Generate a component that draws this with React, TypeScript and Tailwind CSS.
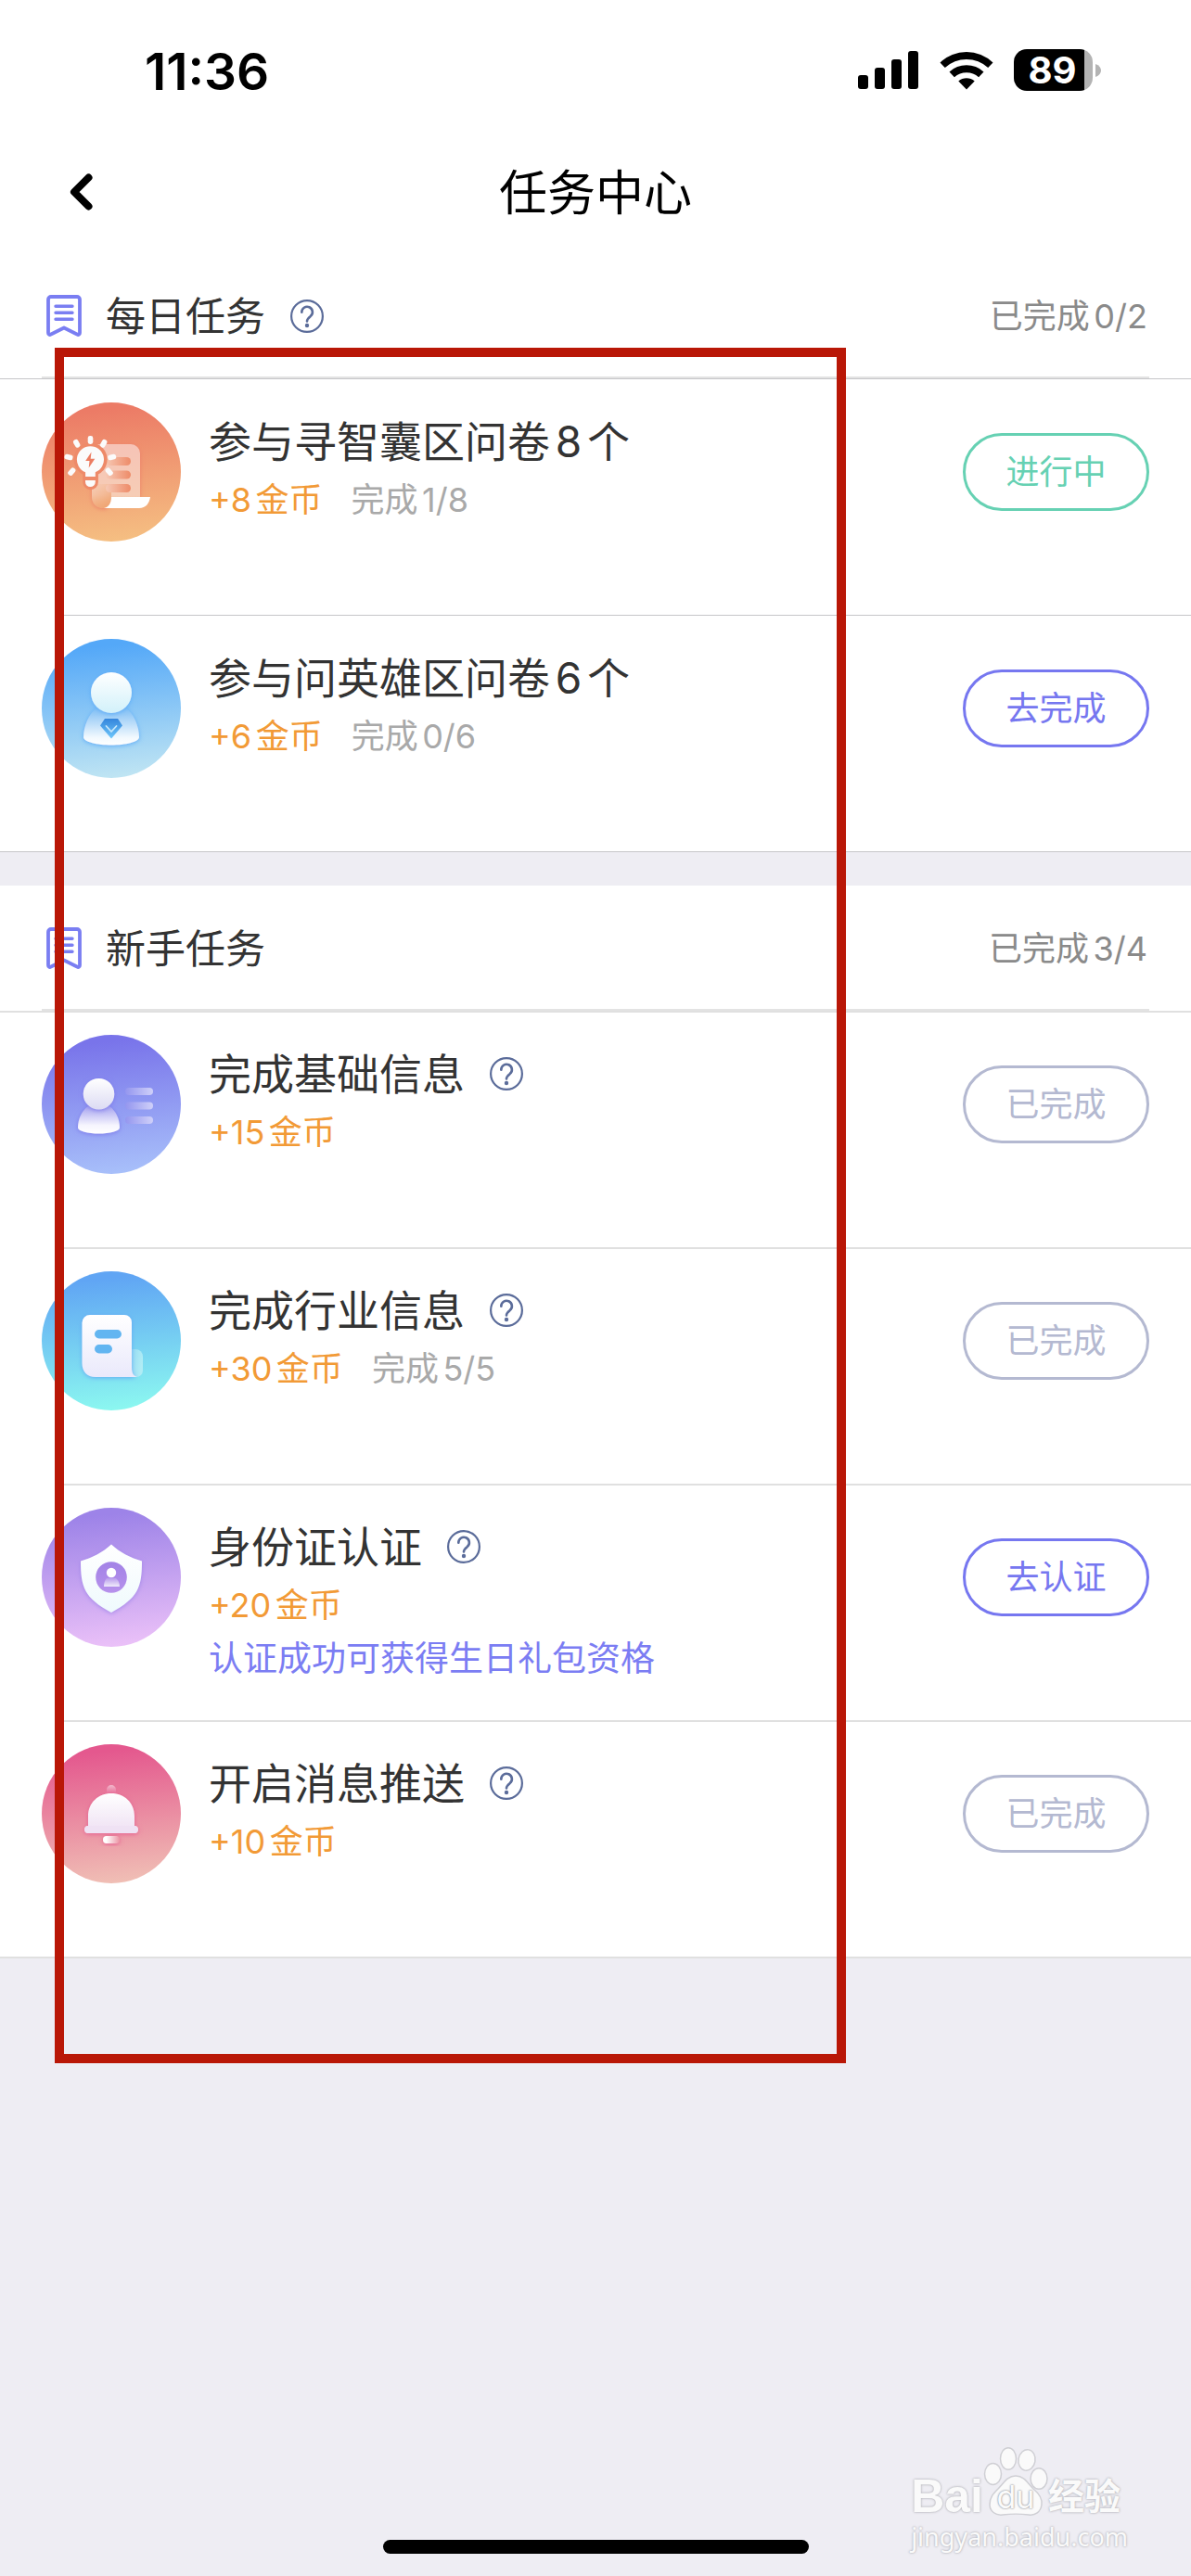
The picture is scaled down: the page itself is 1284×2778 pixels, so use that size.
import type { ReactNode } from "react";

type Status = "ongoing" | "todo" | "done";

type Task = {
  title: string;
  coins: string;
  progress?: string;
  note?: string;
  action: string;
  status: Status;
  help?: boolean;
  icon: ReactNode;
};

const statusStyles: Record<Status, string> = {
  ongoing: "border-[#66d1b3] text-[#66d1b3]",
  todo: "border-[#7677f0] text-[#7677f0]",
  done: "border-[#b4b9d1] text-[#b4b9d1]",
};

function Badge({ id, from, to, children }: { id: string; from: string; to: string; children: ReactNode }) {
  return (
    <svg viewBox="0 0 150 150" className="size-[150px] shrink-0" aria-hidden="true">
      <defs>
        <linearGradient id={`${id}-bg`} x1="0.45" y1="0" x2="0.55" y2="1">
          <stop offset="0.05" stopColor={from} />
          <stop offset="1" stopColor={to} />
        </linearGradient>
        <filter id={`${id}-sh`} x="-30%" y="-30%" width="160%" height="160%">
          <feDropShadow dx="0" dy="1" stdDeviation="2.5" floodColor={from} floodOpacity="0.9" />
        </filter>
      </defs>
      <circle cx="75" cy="75" r="75" fill={`url(#${id}-bg)`} />
      {children}
    </svg>
  );
}

function SurveyIcon() {
  return (
    <Badge id="survey" from="#ec7b66" to="#f5bf82">
      <defs>
        <linearGradient id="survey-page" x1="0" y1="0" x2="0" y2="1">
          <stop offset="0" stopColor="#f6c3b6" />
          <stop offset="0.8" stopColor="#f6cdb6" />
          <stop offset="1" stopColor="#f3b07e" />
        </linearGradient>
        <linearGradient id="survey-curl" x1="0" y1="0" x2="0.6" y2="1">
          <stop offset="0" stopColor="#f4b68e" stopOpacity="0" />
          <stop offset="1" stopColor="#f0a675" />
        </linearGradient>
        <linearGradient id="survey-line" x1="0" y1="0" x2="1" y2="0">
          <stop offset="0" stopColor="#f6c8b4" />
          <stop offset="1" stopColor="#ee8b68" />
        </linearGradient>
      </defs>
      <path
        d="M60 45h36a10 10 0 0 1 10 10v47H75c0 7-3 12-8.500 12C59 114 54 109 54 101V82z"
        fill="url(#survey-page)"
        filter="url(#survey-sh)"
      />
      <path d="M54 88v13c0 8 5 13 12.500 13 5.500 0 8.500-5 8.500-12V88z" fill="url(#survey-curl)" />
      <path d="M75 102h42c-1 7-5 12-12 12H67c5-1 8-5 8-12z" fill="#fff" />
      <rect x="69" y="59" width="27" height="9" rx="4.500" fill="url(#survey-line)" />
      <rect x="69" y="73.500" width="27" height="9" rx="4.500" fill="url(#survey-line)" />
      <rect x="69" y="88" width="27" height="9" rx="4.500" fill="url(#survey-line)" />
      <path
        d="M52.300 43.500a18 18 0 0 0-8 34V86a8.300 8.300 0 0 0 16.600 0v-8.500a18 18 0 0 0-8.600-34z"
        fill="#ee8a69"
      />
      <g fill="#fbfbfb">
        <path d="M52.500 47.200a14.500 14.500 0 0 0-5.400 28V80h10.700v-4.800a14.500 14.500 0 0 0-5.300-28z" />
        <path d="M47 84h10.800v1.700a5.400 5.400 0 0 1-10.800 0z" />
        <rect x="49.700" y="36" width="5.600" height="9" rx="2.400" />
        <rect x="34.900" y="39.800" width="5.600" height="9" rx="2.400" transform="rotate(-30 37.700 44.300)" />
        <rect x="63.900" y="39.800" width="5.600" height="9" rx="2.400" transform="rotate(30 66.700 44.300)" />
        <rect x="26.200" y="54.500" width="5.600" height="9" rx="2.400" transform="rotate(-76 29 59)" />
        <rect x="72.900" y="54.500" width="5.600" height="9" rx="2.400" transform="rotate(76 75.700 59)" />
        <rect x="29.500" y="70.200" width="5.600" height="9" rx="2.400" transform="rotate(42 32.300 74.700)" />
        <rect x="69.900" y="70.200" width="5.600" height="9" rx="2.400" transform="rotate(-42 72.700 74.700)" />
      </g>
      <path d="M53.500 53.500l-6.300 9.500h4.300l-.8 7.500 6.600-9.800h-4.600z" fill="#ec7d62" />
    </Badge>
  );
}

function HeroIcon() {
  return (
    <Badge id="hero" from="#54a8f8" to="#c0e5f3">
      <defs>
        <linearGradient id="hero-head" x1="0" y1="0" x2="0" y2="1">
          <stop offset="0" stopColor="#fff" />
          <stop offset="1" stopColor="#d2f1fa" />
        </linearGradient>
        <linearGradient id="hero-body" x1="0" y1="0" x2="0" y2="1">
          <stop offset="0" stopColor="#7dbdf4" />
          <stop offset="0.8" stopColor="#f2f9fe" />
          <stop offset="1" stopColor="#fff" />
        </linearGradient>
        <linearGradient id="hero-gem" x1="0" y1="0" x2="0" y2="1">
          <stop offset="0" stopColor="#3485dc" />
          <stop offset="1" stopColor="#6fc8fb" />
        </linearGradient>
      </defs>
      <path
        d="M60 74h30c9 6 15 20 15 32 0 5-15 8.500-30 8.500S45 111 45 106c0-12 6-26 15-32z"
        fill="url(#hero-body)"
        filter="url(#hero-sh)"
      />
      <circle cx="75" cy="58" r="22" fill="url(#hero-head)" filter="url(#hero-sh)" />
      <path d="M68 86h14l5 7.500L75 107.500 63 93.500z" fill="url(#hero-gem)" />
      <path d="M69.500 94l5.500 6 5.500-6" fill="none" stroke="#c4e6fb" strokeWidth="1.800" strokeLinecap="round" />
    </Badge>
  );
}

function ProfileIcon() {
  return (
    <Badge id="profile" from="#7974ea" to="#a8c0fa">
      <defs>
        <linearGradient id="profile-head" x1="0" y1="0" x2="0" y2="1">
          <stop offset="0" stopColor="#fff" />
          <stop offset="1" stopColor="#dcdbf3" />
        </linearGradient>
        <linearGradient id="profile-body" x1="0" y1="0" x2="0" y2="1">
          <stop offset="0" stopColor="#a7a4ef" />
          <stop offset="0.7" stopColor="#f6f5fe" />
          <stop offset="1" stopColor="#fff" />
        </linearGradient>
        <linearGradient id="profile-bar" x1="0" y1="0" x2="1" y2="0">
          <stop offset="0" stopColor="#9496ef" />
          <stop offset="1" stopColor="#cfd0f9" />
        </linearGradient>
      </defs>
      <path
        d="M50 77h23c7 5 11 14 11 23 0 4-11 6.500-22.500 6.500S39 104 39 100c0-9 4-18 11-23z"
        fill="url(#profile-body)"
        filter="url(#profile-sh)"
      />
      <circle cx="61.500" cy="63.700" r="16.800" fill="url(#profile-head)" filter="url(#profile-sh)" />
      <rect x="90" y="57" width="30" height="8" rx="4" fill="url(#profile-bar)" />
      <rect x="90" y="72.500" width="30" height="8" rx="4" fill="url(#profile-bar)" />
      <rect x="90" y="88" width="30" height="8" rx="4" fill="url(#profile-bar)" />
    </Badge>
  );
}

function IndustryIcon() {
  return (
    <Badge id="industry" from="#60a5f4" to="#8cf8f0">
      <defs>
        <linearGradient id="industry-doc" x1="0" y1="0" x2="0" y2="1">
          <stop offset="0" stopColor="#fff" />
          <stop offset="1" stopColor="#eae9fb" />
        </linearGradient>
        <linearGradient id="industry-tail" x1="0" y1="0" x2="1" y2="0.3">
          <stop offset="0" stopColor="#8cd5f1" />
          <stop offset="1" stopColor="#b0ecf5" />
        </linearGradient>
      </defs>
      <path d="M92 84h9a8 8 0 0 1 8 8v15a7 7 0 0 1-7 7H92z" fill="url(#industry-tail)" />
      <path
        d="M52 47h37a8 8 0 0 1 8 8v49c0 6 2 9 6 10H58c-9 0-14.500-6-14.500-15V55.500A8.500 8.500 0 0 1 52 47z"
        fill="url(#industry-doc)"
        filter="url(#industry-sh)"
      />
      <rect x="57" y="63" width="29" height="9.500" rx="4.700" fill="#62b5f1" />
      <rect x="57" y="79" width="19" height="9.500" rx="4.700" fill="#62b5f1" />
    </Badge>
  );
}

function IdentityIcon() {
  return (
    <Badge id="identity" from="#9d83e8" to="#ebc1f8">
      <defs>
        <linearGradient id="identity-shield" x1="0" y1="0" x2="0" y2="1">
          <stop offset="0" stopColor="#fff" />
          <stop offset="1" stopColor="#effafd" />
        </linearGradient>
        <linearGradient id="identity-disc" x1="0" y1="0" x2="0" y2="1">
          <stop offset="0" stopColor="#a283e6" />
          <stop offset="1" stopColor="#b791ec" />
        </linearGradient>
        <linearGradient id="identity-body" x1="0" y1="0" x2="0" y2="1">
          <stop offset="0" stopColor="#b99dec" />
          <stop offset="1" stopColor="#f0ebfb" />
        </linearGradient>
      </defs>
      <path
        d="M75 39.500C84 48 96 54 108 57.500C108 86 104 97 75 113C46 97 42 86 42 57.500C54 54 66 48 75 39.500z"
        fill="url(#identity-shield)"
        filter="url(#identity-sh)"
      />
      <circle cx="75" cy="75" r="16.800" fill="url(#identity-disc)" />
      <path d="M70 76h10c2.500 2 4 5 4 9H67c0-4 1-7 3-9z" fill="url(#identity-body)" />
      <circle cx="75" cy="70" r="5.200" fill="#fff" />
    </Badge>
  );
}

function BellIcon() {
  return (
    <Badge id="bell" from="#e4588e" to="#f0bfb5">
      <defs>
        <linearGradient id="bell-dome" x1="0" y1="0" x2="0" y2="1">
          <stop offset="0" stopColor="#fff" />
          <stop offset="1" stopColor="#eee0f3" />
        </linearGradient>
        <linearGradient id="bell-knob" x1="0" y1="0" x2="0" y2="1">
          <stop offset="0" stopColor="#f2b9cc" />
          <stop offset="1" stopColor="#e8709a" />
        </linearGradient>
        <linearGradient id="bell-clap" x1="0" y1="0" x2="1" y2="0">
          <stop offset="0.2" stopColor="#fff" />
          <stop offset="1" stopColor="#eb93a4" />
        </linearGradient>
      </defs>
      <path
        d="M75 53c14 0 25 10 25 25v10a4 4 0 0 1 0 8H50a4 4 0 0 1 0-8V78c0-15 11-25 25-25z"
        fill="url(#bell-dome)"
        filter="url(#bell-sh)"
      />
      <path d="M70 53v-4a5 5 0 0 1 10 0v4q-5-1.200-10 0z" fill="url(#bell-knob)" />
      <rect x="46.500" y="88" width="57" height="8" rx="4" fill="#efe2f4" />
      <rect x="66" y="99" width="18" height="8" rx="4" fill="url(#bell-clap)" filter="url(#bell-sh)" />
    </Badge>
  );
}

function BookmarkIcon() {
  return (
    <svg viewBox="0 0 38 45" className="h-[45px] w-[38px]" fill="none" stroke="#7a7ef2" aria-hidden="true">
      <path
        d="M5 2h28a3 3 0 0 1 3 3v36c0 2-1.500 2.500-3 1.500L19 35.500 5 42.500C3.500 43.500 2 43 2 41V5a3 3 0 0 1 3-3z"
        strokeWidth="3.800"
        strokeLinejoin="round"
      />
      <path d="M10 12.300h18M10 19.300h18M10 26.300h18" strokeWidth="3.400" strokeLinecap="round" />
    </svg>
  );
}

function HelpButton({ label }: { label: string }) {
  return (
    <button type="button" aria-label={label} className="ml-[27px] shrink-0">
      <svg viewBox="0 0 36 36" className="size-9" fill="none" stroke="#5b6c9a" aria-hidden="true">
        <circle cx="18" cy="18" r="16.900" strokeWidth="2.200" />
        <path d="M12.300 13.800a5.800 5.800 0 1 1 9.400 4.300c-2.400 1.900-3.700 2.900-3.700 5.400" strokeWidth="2.600" strokeLinecap="round" />
        <circle cx="18" cy="28" r="2.200" fill="#5b6c9a" stroke="none" />
      </svg>
    </button>
  );
}

function StatusBar() {
  return (
    <div className="flex h-[154px] items-center justify-between pr-[97px] pl-[156px]">
      <time className="text-[55px] leading-none font-semibold text-black">11:36</time>
      <div className="flex items-center pb-[3px]">
        <svg viewBox="0 0 66 42" className="mr-[22px] h-[42px] w-[66px]" aria-label="信号">
          <rect x="0" y="26" width="11" height="15" rx="3" />
          <rect x="18" y="18" width="11" height="23" rx="3" />
          <rect x="36" y="9" width="11" height="32" rx="3" />
          <rect x="54" y="0" width="11" height="41" rx="3" />
        </svg>
        <svg viewBox="0 0 58 42" className="mr-[22px] h-[42px] w-[58px]" aria-label="无线网络">
          <path d="M0.500 12.500a41 41 0 0 1 57 0l-5.300 5.600a34 34 0 0 0-46.400 0z" />
          <path d="M10.500 22.500a27 27 0 0 1 37 0l-5.400 5.700a20 20 0 0 0-26.200 0z" />
          <path d="M20.300 32.500a13.500 13.500 0 0 1 17.400 0L29 41.500z" />
        </svg>
        <div className="flex h-[45px] w-[85px] items-center justify-center rounded-[14px] bg-[linear-gradient(to_right,#000_89%,#b3b3b3_89%)] pr-0.5 text-[40px] leading-none font-bold text-white">
          89
        </div>
        <svg viewBox="0 0 6 14" className="ml-[3px] h-[14px] w-[6px]" fill="#b3b3b3" aria-hidden="true">
          <path d="M0 0c8 3 8 11 0 14z" />
        </svg>
      </div>
    </div>
  );
}

function TaskRow({ task, rule, first }: { task: Task; rule: string; first: boolean }) {
  return (
    <li className="flex min-h-[255px] flex-col">
      <div className={`h-0.5 ${rule} ${first ? "" : "ml-[60px]"}`} />
      <div className="flex items-start px-[45px] pt-6">
        {task.icon}
        <div className="ml-[30px] flex-1 pt-2.5">
          <div className="flex items-center">
            <h3 className="text-[46px] leading-[64px] text-[#333]">{task.title}</h3>
            {task.help && <HelpButton label={`${task.title}说明`} />}
          </div>
          <p className="mt-0.5 flex gap-[31px] text-[36px] leading-[58px]">
            <span className="text-[#f29a36]">{task.coins}</span>
            {task.progress && <span className="text-[#a9a9a9]">{task.progress}</span>}
          </p>
          {task.note && <p className="text-[37px] leading-[58px] text-[#7b7df3]">{task.note}</p>}
        </div>
        <button
          type="button"
          className={`mt-[33px] h-[84px] w-[201px] rounded-full border-3 text-[36px] ${statusStyles[task.status]}`}
        >
          {task.action}
        </button>
      </div>
    </li>
  );
}

function TaskSection({
  title,
  summary,
  help,
  tasks,
  rule,
}: {
  title: string;
  summary: string;
  help?: boolean;
  tasks: Task[];
  rule: string;
}) {
  return (
    <section className="bg-white">
      <header className="mx-[45px] flex h-[135px] items-center border-b-2 border-[#e3e3e3] pt-0.5 pr-0.5 pl-[5px]">
        <BookmarkIcon />
        <h2 className="ml-[26px] pt-0.5 text-[43px] leading-none text-[#333]">{title}</h2>
        {help && <HelpButton label={`${title}说明`} />}
        <p className="ml-auto text-[36px] leading-none text-[#8a8a8a]">{summary}</p>
      </header>
      <ul>
        {tasks.map((task, i) => (
          <TaskRow key={task.title} task={task} rule={rule} first={i === 0} />
        ))}
      </ul>
      <div className={rule} />
    </section>
  );
}

function Watermark() {
  return (
    <div
      className="absolute right-[68px] bottom-[23px] text-[#fafafa] [text-shadow:0_0_2px_#b4b4ba,0_0_3px_#bcbcc2]"
      aria-label="百度经验"
    >
      <div className="flex items-end">
        <span className="text-[50px] leading-[50px] font-bold [font-family:'Liberation_Sans',sans-serif]">Bai</span>
        <div className="relative h-[80px] w-[70px]">
          <svg
            viewBox="0 0 70 80"
            className="size-full overflow-visible"
            fill="#fafafa"
            stroke="#cfcfd4"
            strokeWidth="1.500"
            aria-hidden="true"
          >
            <ellipse cx="10.500" cy="31" rx="9" ry="11.500" />
            <ellipse cx="27" cy="14.500" rx="8.500" ry="11.800" />
            <ellipse cx="47" cy="16" rx="9" ry="11.300" transform="rotate(10 47 16)" />
            <ellipse cx="60" cy="36" rx="9" ry="11.300" />
            <path d="M35 33c9 0 13 8 19 14 6 5 10 10 9 17-1 8-7 12-14 11-8-1-20-1-28 0S7 71 7 64c0-8 4-12 9-17 6-6 10-14 19-14z" />
          </svg>
          <span className="absolute inset-x-0 bottom-[6px] text-center text-[34px] leading-[36px] [text-shadow:0_0_2px_#8f8f96,0_0_2px_#a8a8ae]">
            du
          </span>
        </div>
        <span className="text-[39px] leading-[50px] font-bold">经验</span>
      </div>
      <div className="text-[27px] leading-[38px] [font-family:'Noto_Sans',sans-serif]">jingyan.baidu.com</div>
    </div>
  );
}

const dailyTasks: Task[] = [
  {
    title: "参与寻智囊区问卷8个",
    coins: "+8金币",
    progress: "完成1/8",
    action: "进行中",
    status: "ongoing",
    icon: <SurveyIcon />,
  },
  {
    title: "参与问英雄区问卷6个",
    coins: "+6金币",
    progress: "完成0/6",
    action: "去完成",
    status: "todo",
    icon: <HeroIcon />,
  },
];

const newcomerTasks: Task[] = [
  { title: "完成基础信息", coins: "+15金币", action: "已完成", status: "done", help: true, icon: <ProfileIcon /> },
  {
    title: "完成行业信息",
    coins: "+30金币",
    progress: "完成5/5",
    action: "已完成",
    status: "done",
    help: true,
    icon: <IndustryIcon />,
  },
  {
    title: "身份证认证",
    coins: "+20金币",
    note: "认证成功可获得生日礼包资格",
    action: "去认证",
    status: "todo",
    help: true,
    icon: <IdentityIcon />,
  },
  { title: "开启消息推送", coins: "+10金币", action: "已完成", status: "done", help: true, icon: <BellIcon /> },
];

export default function App() {
  return (
    <div
      className="relative flex min-h-screen flex-col bg-[#eeedf3] [font-family:Inter,'Noto_Sans_CJK_SC',sans-serif] [text-autospace:normal]"
      lang="zh-CN"
    >
      <div className="bg-white pb-[13px]">
        <StatusBar />
        <nav className="grid h-[106px] grid-cols-[1fr_auto_1fr] items-center px-[69px]">
          <button type="button" aria-label="返回" className="justify-self-start">
            <svg viewBox="0 0 38 44" className="h-[44px] w-[38px]" fill="none" stroke="#000" aria-hidden="true">
              <path d="M26.500 6.500L11 22l15.500 15.500" strokeWidth="8" strokeLinecap="round" strokeLinejoin="round" />
            </svg>
          </button>
          <h1 className="pt-1 text-[52px] leading-none text-black">任务中心</h1>
        </nav>
      </div>
      <main className="flex flex-col gap-9">
        <TaskSection
          title="每日任务"
          summary="已完成0/2"
          help
          tasks={dailyTasks}
          rule="border-t border-[#c6c6c8]"
        />
        <TaskSection
          title="新手任务"
          summary="已完成3/4"
          tasks={newcomerTasks}
          rule="border-t-2 border-[#e0e0e0]"
        />
      </main>
      <div className="mx-auto mt-auto mb-6 h-[15px] w-[459px] rounded-full bg-black" />
      <div className="pointer-events-none absolute top-[375px] right-[372px] left-[59px] h-[1850px] border-10 border-[#b91707]" />
      <Watermark />
    </div>
  );
}
